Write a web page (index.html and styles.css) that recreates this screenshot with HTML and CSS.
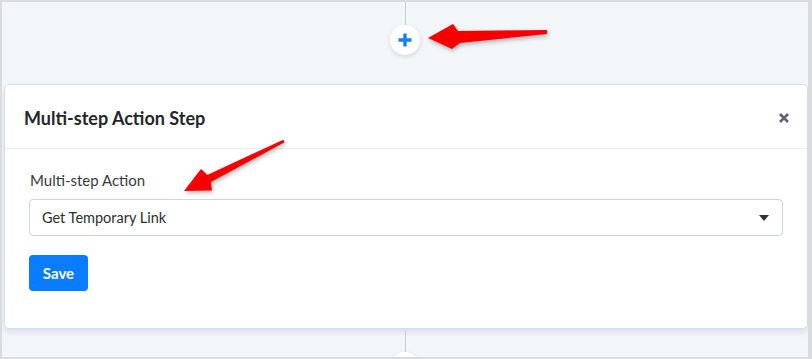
FILE: index.html
```html
<!DOCTYPE html>
<html>
<head>
<meta charset="utf-8">
<link rel="stylesheet" href="styles.css">
</head>
<body>
<div class="frame">
  <div class="top">
    <div class="line line-top"></div>
    <div class="plus-btn">
      <svg width="14" height="14" viewBox="0 0 14 14"><path d="M7 0.5v13M0.5 7h13" stroke="#1a7ef5" stroke-width="3.4" stroke-linecap="butt"/></svg>
    </div>
  </div>
  <div class="card">
    <div class="card-header">
      <div class="title">Multi-step Action Step</div>
      <div class="close">
        <svg width="12" height="12" viewBox="0 0 12 12"><path d="M2 2l8 8M10 2l-8 8" stroke="#5d6773" stroke-width="2.6"/></svg>
      </div>
    </div>
    <div class="card-body">
      <div class="label">Multi-step Action</div>
      <div class="select">
        <span>Get Temporary Link</span>
        <svg class="caret" width="10" height="6" viewBox="0 0 10 6"><path d="M0 0h10L5 6z" fill="#333"/></svg>
      </div>
      <button class="save">Save</button>
    </div>
  </div>
  <div class="bottom">
    <div class="line line-bottom"></div>
    <div class="plus-btn plus-btn-bottom"></div>
  </div>
  <svg class="arrows" width="812" height="359" viewBox="0 0 812 359">
    <defs>
      <filter id="sh" x="-20%" y="-50%" width="140%" height="200%">
        <feDropShadow dx="1" dy="2" stdDeviation="2" flood-color="#000" flood-opacity="0.3"/>
      </filter>
    </defs>
    <path d="M428 38 L453 24 L458 31 L547 30 L547 34 L460 43 L452 49 Z" fill="#f70000" filter="url(#sh)"/>
    <path d="M184 191 L201 169 L207.3 174.9 L283.3 139.7 L284.7 142.3 L210.9 182.1 L212 190.5 Z" fill="#f70000" filter="url(#sh)"/>
  </svg>
</div>
</body>
</html>
```

FILE: styles.css
```css
* { box-sizing: border-box; }
html, body { margin: 0; padding: 0; }
body {
  width: 812px;
  height: 359px;
  overflow: hidden;
  font-family: Lato, "Open Sans", sans-serif;
  background: #ffffff;
}
.frame {
  position: relative;
  width: 812px;
  height: 359px;
  border: 2px solid #d9dbde;
  border-right-width: 4px;
  background: #f3f6f9;
  overflow: hidden;
  display: flex;
  flex-direction: column;
}
.frame > * { flex-shrink: 0; }
.top {
  height: 82px;
  display: flex;
  flex-direction: column;
  align-items: center;
}
.line {
  width: 1px;
  background: #c9cccf;
  flex-shrink: 0;
}
.line-top { height: 23px; }
.plus-btn {
  flex-shrink: 0;
  width: 30px;
  height: 30px;
  border-radius: 50%;
  background: #fff;
  box-shadow: 0 2px 5px rgba(0,0,0,0.12);
  display: flex;
  align-items: center;
  justify-content: center;
}
.card {
  margin: 0 0 0 2px;
  width: 804px;
  height: 245px;
  background: #fff;
  border: 1px solid #d3dff0;
  border-radius: 5px;
  box-shadow: 0 3px 6px rgba(90,110,150,0.18);
  display: flex;
  flex-direction: column;
}
.card-header {
  height: 64px;
  flex-shrink: 0;
  padding: 0 17px 0 19px;
  border-bottom: 1px solid #e6eef7;
  display: flex;
  align-items: center;
  justify-content: space-between;
}
.title {
  font-size: 18px;
  font-weight: 700;
  color: #23272b;
  padding-top: 2px;
}
.close {
  display: flex;
  padding-top: 2px;
}
.card-body {
  padding: 21px 24px 0 24px;
}
.label {
  font-size: 15px;
  line-height: 20px;
  color: #373b3f;
  margin-left: 1px;
  margin-bottom: 9px;
}
.select {
  height: 37px;
  border: 1px solid #ced4da;
  border-radius: 4px;
  padding: 0 13px 0 12px;
  display: flex;
  align-items: center;
  justify-content: space-between;
  font-size: 14.5px;
  color: #2b2f33;
}
.save {
  margin-top: 19px;
  width: 59px;
  height: 36px;
  border: none;
  border-radius: 4px;
  background: #0a7cff;
  color: #fff;
  font-family: Lato, "Open Sans", sans-serif;
  font-size: 15px;
  font-weight: 700;
  padding: 0;
}
.bottom {
  display: flex;
  flex-direction: column;
  align-items: center;
  padding-top: 1px;
}
.line-bottom { height: 22px; }
.arrows {
  position: absolute;
  left: -2px;
  top: -2px;
  pointer-events: none;
}
```
